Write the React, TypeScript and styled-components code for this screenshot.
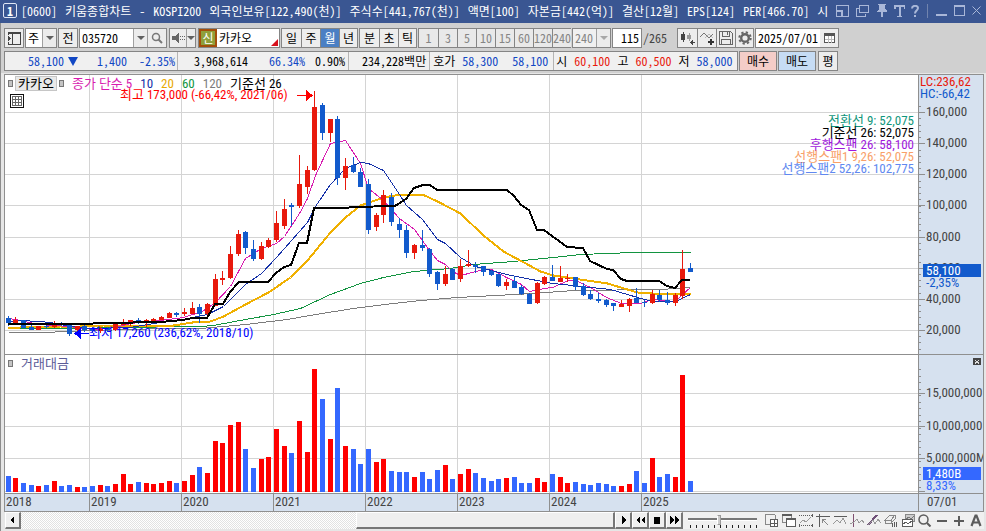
import React from 'react';
import styled, { createGlobalStyle, css } from 'styled-components';

const MONO = '"Noto Sans Mono CJK KR", "Noto Sans CJK KR", monospace';
const NARROW = '"Roboto Condensed", Roboto, "Noto Sans CJK KR", sans-serif';

const GlobalStyle = createGlobalStyle`
  * { box-sizing: border-box; }
  body { margin: 0; background: #e6e6e6; font: 12px/16px ${MONO}; color: #000; }
  button, input, select { font: inherit; color: inherit; border-radius: 0; }
`;

const RED = '#e8190c';
const BLUE = '#1147c4';

const Page = styled.div`
  min-height: 100vh;
  display: flex;
  flex-direction: column;
  border-left: 1px solid #8c8c8c;
`;

/* ---------- title bar ---------- */

const TitleBar = styled.header`
  height: 23px;
  margin-left: -1px;
  padding: 0 1px 2px 3px;
  display: flex;
  align-items: center;
  background: #3a5692;
  color: #fff;
`;
const WindowNumber = styled.span`
  width: 14px;
  height: 15px;
  border: 1px solid #dfe6f5;
  border-radius: 2px;
  font-weight: 700;
  line-height: 13px;
  text-align: center;
`;
const Title = styled.h1`
  flex: 1;
  min-width: 0;
  display: flex;
  gap: 8px;
  margin: 0 0 0 4px;
  overflow: hidden;
  white-space: pre;
  font-size: 12px;
  font-weight: 400;
  line-height: 20px;
`;
const WindowButtons = styled.div`
  display: flex;
  align-items: center;
`;
const WindowButton = styled.button<{ $w?: number }>`
  width: ${p => p.$w ?? 18}px;
  height: 20px;
  padding: 0;
  border: 0;
  background: none;
  color: #a9b7d8;
  display: flex;
  align-items: center;
  justify-content: center;
`;
const TitleDivider = styled.span`
  width: 1px;
  height: 14px;
  margin: 0 4px;
  background: #7184ae;
`;

/* ---------- toolbars ---------- */

const Toolbars = styled.div`
  padding: 5px 0 2px 3px;
  display: flex;
  flex-direction: column;
  gap: 3px;
  background: #d0d0d0;
`;
const Bar = styled.div`
  height: 20px;
  display: flex;
  gap: 1px;
  white-space: pre;
`;
const Group = styled.div<{ $w?: number; $ml?: number; $white?: boolean }>`
  position: relative;
  display: flex;
  flex: none;
  width: ${p => (p.$w ? `${p.$w}px` : 'auto')};
  margin-left: ${p => p.$ml ?? 0}px;
  border: 1px solid #858585;
  background: ${p => (p.$white ? '#fff' : '#f0f0f0')};
`;
const ToolButton = styled.button<{ $w?: number; $on?: boolean; $dim?: boolean; $bg?: string }>`
  width: ${p => p.$w ?? 19}px;
  height: 18px;
  flex: none;
  padding: 0;
  border: 0;
  background: ${p => (p.$on ? '#4a7fc4' : p.$bg ?? '#ededed')};
  color: ${p => (p.$on ? '#fff' : p.$dim ? '#858585' : '#000')};
  display: flex;
  align-items: center;
  justify-content: center;
  line-height: 18px;
  & + & { border-left: 1px solid #858585; }
`;
const DropArrow = styled.button<{ $w: number; $dim?: boolean }>`
  width: ${p => p.$w}px;
  flex: none;
  padding: 0;
  border: 0;
  border-left: 1px solid #a0a0a0;
  background: #ececec;
  display: flex;
  align-items: center;
  justify-content: center;
  &::after {
    content: '';
    border: 4px solid transparent;
    border-top-color: ${p => (p.$dim ? '#a8a8a8' : '#606060')};
    border-bottom: 0;
  }
  & + ${ToolButton} { border-left: 1px solid #a0a0a0; }
`;
const Field = styled.input<{ $right?: boolean }>`
  flex: 1;
  min-width: 0;
  width: 0;
  padding: 0 2px;
  border: 0;
  background: none;
  outline: 0;
  line-height: 18px;
  text-align: ${p => (p.$right ? 'right' : 'left')};
`;
const Select = styled.select<{ $dim?: boolean }>`
  flex: 1;
  min-width: 0;
  padding: 0 0 0 2px;
  border: 0;
  outline: 0;
  appearance: none;
  background: none;
  color: ${p => (p.$dim ? '#858585' : '#000')};
`;
const CreditBadge = styled.button`
  width: 18px;
  height: 18px;
  padding: 0;
  border: 2px solid #a34e0a;
  background: #8f9f3a;
  color: #fff;
  line-height: 14px;
`;
const RedCorner = styled.span`
  position: absolute;
  right: 1px;
  bottom: 1px;
  border-left: 7px solid transparent;
  border-bottom: 7px solid #d8101c;
`;
const Total = styled.span`
  width: 33px;
  line-height: 20px;
  color: #444;
`;

const QuoteCell = styled.div<{ $pl: number; $pr: number }>`
  display: flex;
  align-items: center;
  line-height: 18px;
  padding: 0 ${p => p.$pr}px 0 ${p => p.$pl}px;
  & + & { border-left: 1px solid #b4b4b4; }
`;
const Num = styled.span<{ $tone?: 'up' | 'down'; $gap?: number }>`
  margin-left: ${p => p.$gap ?? 0}px;
  color: ${p => (p.$tone === 'up' ? RED : p.$tone === 'down' ? BLUE : '#000')};
`;
const DownMark = styled.i`
  margin-left: 4px;
  border: 5px solid transparent;
  border-top: 9px solid ${BLUE};
  border-bottom: 0;
`;

/* ---------- chart ---------- */

const ChartFrame = styled.main`
  margin: 1px 2px 0 3px;
  border: 1px solid #8f8f8f;
  font-family: ${NARROW};
`;
const ChartGrid = styled.div`
  display: grid;
  grid-template-columns: minmax(0, 1fr) 65px;
`;
const Pane = styled.section<{ $h: number }>`
  position: relative;
  height: ${p => p.$h}px;
  border-bottom: 1px solid #8f8f8f;
  background: #fff;
  overflow: hidden;
`;
const Axis = styled.aside<{ $h: number }>`
  position: relative;
  height: ${p => p.$h}px;
  border-left: 1px solid #8f8f8f;
  border-bottom: 1px solid #8f8f8f;
  background: #d6e1ef;
  overflow: hidden;
`;
const Plot = styled.svg`
  display: block;
  width: 100%;
  height: 100%;
  font: 13px ${NARROW};
`;
const Legend = styled.div`
  position: absolute;
  top: 1px;
  left: 3px;
  display: flex;
  align-items: center;
  gap: 8px;
  height: 15px;
  white-space: pre;
  font-size: 13px;
`;
const Dot = styled.span`
  width: 5px;
  height: 7px;
  border: 1px solid #777;
  background: #c4c4c4;
`;
const NameTag = styled.button`
  height: 15px;
  width: 42px;
  margin: 0 -6px;
  padding: 0;
  border: 1px solid #c6c6c6;
  background: #e9e9e9;
  line-height: 13px;
`;
const LegendItem = styled.span<{ $c: string }>`
  color: ${p => p.$c};
  line-height: 15px;
`;
const GridToggle = styled.button`
  position: absolute;
  left: 5px;
  top: 19px;
  width: 14px;
  height: 14px;
  padding: 0;
  border: 1px solid #111;
  background: #fff;
  display: flex;
  align-items: center;
  justify-content: center;
`;
const SpanList = styled.ul`
  position: absolute;
  right: 4px;
  top: 40px;
  margin: 0;
  padding: 0;
  list-style: none;
  text-align: right;
  font-size: 13px;
  line-height: 12px;
`;
const SpanItem = styled.li<{ $c: string }>`
  color: ${p => p.$c};
`;
const Extremes = styled.div`
  position: absolute;
  left: 1px;
  top: 1px;
  font-size: 13px;
  line-height: 12px;
`;
const Extreme = styled.div<{ $c: string }>`
  color: ${p => p.$c};
`;
const CloseMark = styled.button`
  position: absolute;
  right: 2px;
  top: 3px;
  width: 8px;
  height: 7px;
  padding: 0;
  border: 0;
  background: #444;
  display: flex;
`;
const DateBar = styled.div`
  display: flex;
  height: 17px;
  background: #d6e1ef;
  color: #444;
  font-size: 13px;
  line-height: 16px;
`;
const Year = styled.span<{ $w?: number }>`
  flex: ${p => (p.$w ? 'none' : '1')};
  width: ${p => (p.$w ? `${p.$w}px` : 'auto')};
  padding-left: 1px;
  & + & { border-left: 1px solid #8f8f8f; }
`;
const LastDate = styled.span`
  padding-left: 8px;
  border-left: 1px solid #8f8f8f;
  background: #d6e1ef;
  color: #444;
  font-size: 13px;
  line-height: 16px;
`;

/* ---------- bottom bar ---------- */

const BottomBar = styled.footer`
  display: flex;
  height: 17px;
  margin: 0 2px 0 4px;
  background: #f0f0f0;
`;
const raised = css`
  border: 1px solid #fff;
  border-right: 2px solid #777;
  border-bottom: 2px solid #777;
  background: #efefef;
`;
const ScrollButton = styled.button<{ $w: number }>`
  ${raised}
  width: ${p => p.$w}px;
  flex: none;
  padding: 0;
  display: flex;
  align-items: center;
  justify-content: center;
`;
const Track = styled.div`
  flex: 337;
  background: repeating-conic-gradient(#e2e2e2 0 25%, #fff 0 50%) 0 0 / 2px 2px;
`;
const Thumb = styled.div`
  ${raised}
  flex: 258;
`;
const ZoomBox = styled.div`
  width: 80px;
  flex: none;
  padding: 2px 4px 0 5px;
`;
const ZoomRange = styled.input`
  display: block;
  width: 69px;
  height: 10px;
  margin: 0;
  appearance: none;
  background: none;
  &::-webkit-slider-runnable-track {
    height: 3px;
    border-top: 2px solid #777;
    border-bottom: 1px solid #fff;
    background: #ddd;
  }
  &::-webkit-slider-thumb {
    appearance: none;
    width: 4px;
    height: 10px;
    margin-top: -5px;
    border: 1px solid #999;
    border-left-color: #fff;
    background: #ccc;
  }
`;
const ZoomTicks = styled.div`
  height: 3px;
  margin: 1px 2px 0 2px;
  background: repeating-linear-gradient(90deg, #222 0 1px, transparent 1px 6px);
`;
const IconRow = styled.div`
  display: flex;
  align-items: center;
`;
const IconButton = styled.button`
  width: 17px;
  height: 17px;
  padding: 0;
  border: 0;
  background: none;
  display: flex;
  align-items: center;
  justify-content: center;
`;

/* ---------- icons ---------- */

type IconProps = { w?: number; h?: number; c?: string; crisp?: boolean; children: React.ReactNode };
const Icon = ({ w = 14, h = 13, c = '#5c5c5c', crisp = true, children }: IconProps) => (
  <svg width={w} height={h} viewBox={`0 0 ${w} ${h}`} fill="none" stroke={c} shapeRendering={crisp ? 'crispEdges' : 'auto'} aria-hidden="true">
    {children}
  </svg>
);
const TC = '#a9b7d8';

/* ---------- data ---------- */

/* rising flag, body top, body bottom, high, low, volume top */
type Candle = [0 | 1, number, number, number, number, number];
const CANDLES: Candle[] = [
  [0, 318, 323, 316, 326, 476], [1, 320, 323, 317, 324, 478], [0, 320, 328, 320, 328, 483], [0, 327, 330, 325, 330, 485],
  [1, 326, 330, 326, 330, 486], [0, 326, 327, 325, 328, 485], [1, 323, 327, 321, 328, 481], [0, 323, 325, 322, 326, 486],
  [0, 324, 334, 323, 336, 485], [1, 326, 330, 326, 331, 487], [0, 326, 330, 325, 332, 487], [0, 329, 331, 327, 333, 486],
  [1, 328, 331, 327, 333, 485], [0, 328, 330, 327, 332, 486], [1, 323, 330, 323, 331, 484], [1, 323, 325, 319, 325, 474],
  [1, 320, 324, 320, 326, 484], [0, 320, 323, 318, 324, 482], [1, 320, 323, 319, 327, 483], [1, 319, 321, 318, 322, 484],
  [1, 317, 320, 316, 320, 483], [1, 313, 318, 312, 318, 481], [0, 313, 315, 312, 317, 483], [1, 312, 314, 308, 316, 481],
  [1, 308, 314, 302, 314, 475], [0, 307, 314, 304, 323, 467], [1, 304, 314, 303, 315, 473], [1, 279, 306, 274, 306, 441],
  [1, 278, 280, 271, 285, 443], [1, 254, 278, 246, 279, 425], [1, 234, 254, 230, 256, 422], [0, 232, 248, 231, 254, 449],
  [0, 249, 259, 240, 261, 468], [1, 246, 259, 242, 260, 459], [1, 240, 247, 238, 248, 457], [1, 223, 240, 211, 242, 429],
  [1, 209, 226, 199, 229, 446], [0, 205, 207, 203, 226, 453], [1, 184, 206, 155, 208, 421], [1, 170, 187, 166, 194, 452],
  [1, 107, 170, 91, 171, 369], [0, 105, 133, 103, 140, 399], [1, 119, 133, 119, 142, 439], [0, 119, 178, 116, 185, 388],
  [1, 166, 178, 158, 190, 446], [0, 165, 172, 157, 173, 449], [0, 172, 187, 168, 187, 464], [0, 184, 230, 179, 234, 449],
  [1, 215, 227, 213, 231, 462], [1, 195, 215, 190, 223, 459], [0, 197, 222, 193, 226, 471], [0, 224, 230, 218, 238, 472],
  [0, 230, 253, 225, 258, 472], [1, 245, 253, 244, 259, 477], [0, 245, 248, 230, 251, 472], [0, 249, 274, 248, 277, 479],
  [0, 272, 284, 271, 290, 470], [1, 274, 284, 266, 286, 465], [0, 269, 280, 268, 280, 479], [1, 266, 279, 259, 282, 474],
  [1, 264, 266, 250, 267, 469], [0, 265, 267, 262, 273, 473], [0, 266, 272, 266, 276, 478], [0, 271, 275, 270, 276, 481],
  [0, 274, 286, 274, 287, 479], [1, 282, 286, 279, 290, 478], [0, 281, 288, 276, 288, 477], [0, 287, 294, 285, 295, 483],
  [0, 294, 304, 293, 304, 483], [1, 283, 303, 282, 304, 478], [1, 277, 284, 276, 285, 482], [0, 277, 281, 265, 281, 474],
  [1, 278, 282, 266, 282, 477], [1, 278, 279, 274, 282, 483], [0, 277, 287, 277, 290, 482], [0, 286, 295, 283, 296, 484],
  [0, 294, 299, 290, 300, 485], [0, 299, 301, 293, 303, 483], [0, 300, 305, 299, 307, 484], [0, 303, 306, 303, 311, 486],
  [1, 304, 307, 300, 307, 486], [1, 299, 306, 298, 312, 484], [0, 298, 303, 288, 303, 471], [0, 302, 303, 300, 307, 483],
  [1, 294, 303, 290, 304, 458], [0, 295, 300, 290, 302, 477], [0, 300, 303, 292, 305, 474], [1, 295, 303, 293, 306, 477],
  [1, 269, 296, 250, 299, 375], [0, 268, 272, 263, 272, 481],
];
const candleX = (i: number) => 8 + Math.floor((i * 92) / 12);

const LINES: { color: string; width: number; points: string }[] = [
  { color: '#7c7c7c', width: 1, points: '8,332 50,332 60,331 130,329 163,328 200,328 245,324 287,319 315,314 353,308 393,303 420,300 457,297 533,293 573,290 660,289 690,287' },
  { color: '#129440', width: 1, points: '8,328 80,328 113,327 200,326 213,325 245,319 273,314 300,308 330,294 360,283 383,277 413,271 450,268 473,264 513,261 553,257 580,254 633,252 690,252' },
  { color: '#f0b000', width: 2, points: '8,328 20,327 60,326 80,326 103,325 173,325 192,322 210,321 223,316 245,304 268,292 290,277 307,260 330,232 345,217 360,205 383,197 400,194 422,194 437,201 460,213 483,235 503,251 514,257 529,265 540,271 553,275 573,278 607,283 637,292 667,294 683,293 690,293' },
  { color: '#d81cb0', width: 1, points: '8,318 20,320 38,324 69,326 92,329 115,327 130,323 160,320 183,317 202,311 215,302 230,286 245,258 261,248 276,243 284,236 299,213 307,198 315,175 330,143 345,140 360,163 368,188 383,200 399,218 414,229 429,250 437,260 445,264 452,271 460,275 468,273 483,269 491,269 506,277 521,284 529,291 544,288 552,287 568,280 575,280 590,287 606,297 621,303 640,303 652,299 675,301 682,294 690,287' },
  { color: '#1430a8', width: 1, points: '8,321 20,320 38,321 50,322 70,326 92,328 130,327 160,322 183,319 207,314 223,306 245,284 261,273 276,257 291,240 307,222 315,206 330,184 345,168 360,162 368,163 383,170 399,194 406,205 422,219 437,239 445,243 460,257 475,266 491,270 506,274 521,277 552,283 573,285 590,287 610,289 637,297 652,301 675,301 690,294' },
  { color: '#000', width: 2, points: '8,324 80,324 107,323 160,322 183,320 192,318 207,318 215,304 223,304 230,292 239,282 268,282 276,273 284,267 291,265 299,243 307,243 314,208 345,208 353,207 395,206 406,199 414,188 423,185 430,185 437,190 507,190 514,196 521,205 529,210 537,230 544,230 567,247 583,248 590,261 607,269 613,270 621,279 627,281 659,281 667,286 675,288 682,280 690,280' },
];

const YEARS = [89, 181, 273, 365, 457, 549, 641];
const PRICE_LEVELS: [number, string][] = [
  [112, '160,000'], [143, '140,000'], [174, '120,000'], [205, '100,000'], [237, '80,000'], [268, '60,000'], [299, '40,000'], [330, '20,000'],
];
const VOLUME_LEVELS: [number, string][] = [[393, '15,000,000'], [426, '10,000,000'], [458, '5,000,000M'], [491, '']];
const PRICE_TICKS = Array.from({ length: 40 }, (_, i) => Math.round(106 + i * 6.22));
const VOLUME_TICKS = Array.from({ length: 19 }, (_, i) => Math.round(369 + i * 6.54));

const GridLines = ({ levels }: { levels: [number, string][] }) => (
  <g stroke="#d4d4d4">
    {levels.map(([y]) => <line key={y} x1="0" x2="101%" y1={y + 0.5} y2={y + 0.5} />)}
    {YEARS.map(x => <line key={x} x1={x + 0.5} x2={x + 0.5} y1="75" y2="493" />)}
  </g>
);

const AxisMarks = ({ levels, ticks }: { levels: [number, string][]; ticks: number[] }) => (
  <>
    <g stroke="#8f8f8f">
      {ticks.map(y => <line key={y} x1="0" x2="2" y1={y + 0.5} y2={y + 0.5} />)}
      {levels.map(([y]) => <line key={y} x1="0" x2="6" y1={y + 0.5} y2={y + 0.5} />)}
    </g>
    <g fill="#444">
      {levels.map(([y, label]) => label && <text key={y} x="7" y={y + 4}>{label}</text>)}
    </g>
  </>
);

const TITLE = ['[0600]', '키움종합차트', '-', 'KOSPI200', '외국인보유[122,490(천)]', '주식수[441,767(천)]', '액면[100]', '자본금[442(억)]', '결산[12월]', 'EPS[124]', 'PER[466.70]', '시'];
const LEGEND: [string, string][] = [
  ['종가 단순 5', '#d81cb0'], ['10', '#1430a8'], ['20', '#e8a800'], ['60', '#129440'], ['120', '#7c7c7c'], ['기준선 26', '#000'],
];
const SPANS: [string, string][] = [
  ['전환선 9: 52,075', '#10967c'], ['기준선 26: 52,075', '#000'], ['후행스팬 26: 58,100', '#a018dc'],
  ['선행스팬1 9,26: 52,075', '#f8a068'], ['선행스팬2 52,26: 102,775', '#6088f0'],
];

const CHART_TOOLS: [string, React.ReactNode][] = [
  ['새 창 추가', <><path d="M10.5 5V1.5L9.5 .5H.5V10.5H5" stroke="#888" /><rect x="5.5" y="5.5" width="7" height="7" fill="#fff" /><path d="M9.5 6V12M6 9.5H12" /></>],
  ['창 겹치기', <><rect x="0.5" y="0.5" width="9" height="8" stroke="#888" /><path d="M0 1H10" strokeWidth="2" /><rect x="4.5" y="4.500" width="9" height="8" fill="#fff" /><path d="M4 5H14" strokeWidth="2" /></>],
  ['영역 선택', <><path d="M0 1.5H14M0 11.5H14" strokeDasharray="1 1" /><path d="M1 9L4 6L7 8L12 3" stroke="#999" /><path d="M13.5 0V3M13.5 10V13M.5 10V13" /></>],
  ['십자선', <><path d="M0 2.5H14M3.5 0V13" /><path d="M6 5.5H10M6.5 5V9M7 6L12 11" stroke="#888" /></>],
  ['가로선', <><path d="M1 2.5H14" /><path d="M0 10L4 6L7 9L10 4L13 10" stroke="#999" /></>],
  ['세로선', <><path d="M3.5 0V13" stroke="#805070" /><path d="M0 10L4 8L7 5L9 9L12 6L14 9" stroke="#999" /></>],
  ['추세선', <><path d="M1 11L10 1" stroke="#705078" strokeWidth="2" /><path d="M1 11L6 6L8 10L11 5L14 9" stroke="#999" /></>],
  ['모두 지우기', <><path d="M1 6L6 1H11L7 6ZM1 6V9H7V6M7 9L11 5V1" stroke="#888" /><path d="M8.5 9V13M10.5 8V13M12.5 8V13" /></>],
  ['차트 비교', <><rect x="4.500" y="0.500" width="9" height="7" fill="#ccc" stroke="#888" /><path d="M5 5L8 3L10 5L13 2" stroke="#777" /><rect x="1.500" y="5.500" width="10" height="7" fill="#fff" /><path d="M2 10L5 8L7 10L11 7" /></>],
];

export default function App() {
  return (
    <Page>
      <GlobalStyle />
      <TitleBar>
        <WindowNumber>1</WindowNumber>
        <Title>{TITLE.map(part => <span key={part}>{part}</span>)}</Title>
        <WindowButtons>
          <WindowButton $w={20} aria-label="창 크기"><Icon w={13} h={12} c={TC}><rect x="0.500" y="0.500" width="12" height="11" /><path d="M1 6H6V11" strokeWidth="2" /></Icon></WindowButton>
          <WindowButton $w={21} aria-label="창 복제"><Icon w={13} h={12} c={TC}><rect x="3.5" y="0.5" width="9" height="7" /><path d="M2.5 3.5H.5V11.5H9.5V9" /></Icon></WindowButton>
          <WindowButton aria-label="고정"><Icon w={12} h={13} c="none"><path d="M2 0H10V1H9V5L11 7V8H1V7L3 5V1H2Z M5 8H7V13H5Z" fill={TC} /></Icon></WindowButton>
          <WindowButton $w={16} aria-label="글꼴"><Icon w={11} h={12} c={TC}><path d="M0 1H11M5.500 1V11M3 11.500H8M.5 1V4M10.500 1V4" strokeWidth="2" /></Icon></WindowButton>
          <WindowButton $w={16} aria-label="도움말"><Icon w={8} h={12} c={TC} crisp={false}><path d="M1 3.500C1 0 7 0 7 3C7 5.500 4 5.500 4 8.500M4 10V12" strokeWidth="2" /></Icon></WindowButton>
          <TitleDivider />
          <WindowButton aria-label="최소화"><Icon w={11} h={12} c={TC}><path d="M0 10H11" strokeWidth="2" /></Icon></WindowButton>
          <WindowButton aria-label="최대화"><Icon w={11} h={11} c={TC}><rect x="0.5" y="1.500" width="10" height="9" /><path d="M0 1H11" strokeWidth="2" /></Icon></WindowButton>
          <WindowButton $w={17} aria-label="닫기"><Icon w={9} h={9} c={TC} crisp={false}><path d="M.5 .5L8.5 8.5M8.500 .5L.5 8.500" /></Icon></WindowButton>
        </WindowButtons>
      </TitleBar>

      <Toolbars>
        <Bar>
          <Group $w={20}>
            <ToolButton $w={18} aria-label="메뉴 열기"><Icon w={13} h={13} c="#444"><path d="M.5 3V.5H12.500V12.500H.5V10M4.500 1V12M1 1.500H12" /><path d="M0 4L3 6.500L0 9Z" fill="#444" stroke="none" /></Icon></ToolButton>
          </Group>
          <Group $w={32} $white>
            <Select aria-label="시장 구분" defaultValue="주"><option>주</option></Select>
            <DropArrow $w={14} aria-label="시장 목록" />
          </Group>
          <Group $w={20}><ToolButton $w={18}>전</ToolButton></Group>
          <Group $w={88} $white>
            <Field aria-label="종목코드" defaultValue="035720" />
            <DropArrow $w={14} aria-label="종목 목록" />
            <ToolButton $w={19} aria-label="종목 검색"><Icon w={12} h={12} c="#777" crisp={false}><circle cx="5" cy="5" r="3.500" strokeWidth="1.500" /><path d="M7.500 7.500L11 11" strokeWidth="2" /></Icon></ToolButton>
          </Group>
          <Group $w={27} $ml={1}>
            <ToolButton $w={16} aria-label="음성"><Icon w={13} h={12} c="none"><path d="M0 4H3L7 0V12L3 8H0Z" fill="#666" /><path d="M8 4h1v1h-1zM10 4h1v1h-1zM12 4h1v1h-1zM8 7h1v1h-1zM10 7h1v1h-1zM12 7h1v1h-1z" fill="#666" /></Icon></ToolButton>
            <DropArrow $w={9} aria-label="음성 설정" />
          </Group>
          <Group $w={82} $ml={1} $white>
            <CreditBadge>신</CreditBadge>
            <Field aria-label="종목명" defaultValue="카카오" />
            <RedCorner />
          </Group>
          <Group>
            <ToolButton>일</ToolButton><ToolButton>주</ToolButton><ToolButton $on>월</ToolButton><ToolButton $w={18}>년</ToolButton>
          </Group>
          <Group>
            <ToolButton>분</ToolButton><ToolButton>초</ToolButton><ToolButton $w={18}>틱</ToolButton>
          </Group>
          <Group $w={153}>
            {['1', '3', '5', '10', '15', '60', '120', '240'].map(n => <ToolButton key={n} $dim $bg="#e9e9e9">{n}</ToolButton>)}
          </Group>
          <Group $w={39}>
            <Select $dim aria-label="분 단위" defaultValue="240"><option>240</option></Select>
            <DropArrow $w={14} $dim aria-label="분 단위 목록" />
          </Group>
          <Group $w={30} $white><Field $right aria-label="표시 개수" defaultValue="115" /></Group>
          <Total>/265</Total>
          <Group>
            <ToolButton aria-label="차트 유형"><Icon w={14} h={13} c="none"><path d="M0 2H4V8H0ZM2 0h1v10H2Z" fill="#444" /><path d="M6 3H10V7H6ZM8 1h1v8H8Z" fill="#999" /><path d="M9 10h5v1H9zM9 10l3-3v7z" fill="#444" /></Icon></ToolButton>
            <ToolButton aria-label="지표 추가"><Icon w={14} h={13} c="#777"><path d="M0 5L4 1L9 6L13 2" /><path d="M5 6L9 2L13 6" stroke="#bbb" /><path d="M11 7V13M8 10H14" stroke="#333" strokeWidth="2" /></Icon></ToolButton>
            <ToolButton aria-label="저장"><Icon w={14} h={14} c="#666"><path d="M.5 .5H11.500L13.500 2.500V13.500H.5ZM3.500 1V5.500H10.500V1M2.500 13V8.500H11.500V13M8.500 1V4" /></Icon></ToolButton>
            <ToolButton $w={18} aria-label="설정"><Icon w={14} h={14} c="#666" crisp={false}><circle cx="7" cy="7" r="3.800" strokeWidth="2.400" /><circle cx="7" cy="7" r="5.700" strokeWidth="2" strokeDasharray="2.240 2.240" /></Icon></ToolButton>
          </Group>
          <Group $w={84} $white>
            <Field aria-label="기준일" defaultValue="2025/07/01" />
            <ToolButton $w={18} aria-label="달력"><Icon w={11} h={10} c="#555"><rect x="0.500" y="0.500" width="10" height="9" fill="#fff" /><path d="M0 1.500H11" strokeWidth="3" /><path d="M1 6.500H10M4.500 3V10M7.500 3V10" stroke="#bbb" /></Icon></ToolButton>
          </Group>
        </Bar>

        <Bar>
          <Group $w={734}>
            <QuoteCell $pl={23} $pr={2}>
              <Num $tone="down">58,100</Num><DownMark /><Num $tone="down" $gap={19}>1,400</Num><Num $tone="down" $gap={12}>-2.35%</Num>
            </QuoteCell>
            <QuoteCell $pl={16} $pr={3}>
              <Num>3,968,614</Num><Num $tone="down" $gap={21}>66.34%</Num><Num $gap={10}>0.90%</Num>
            </QuoteCell>
            <QuoteCell $pl={13} $pr={3}><Num>234,228백만</Num></QuoteCell>
            <QuoteCell $pl={3} $pr={5}>
              <Num>호가</Num><Num $tone="down" $gap={7}>58,300</Num><Num $tone="down" $gap={14}>58,100</Num>
            </QuoteCell>
            <QuoteCell $pl={2} $pr={5}>
              <Num>시</Num><Num $tone="up" $gap={7}>60,100</Num>
              <Num $gap={7}>고</Num><Num $tone="up" $gap={7}>60,500</Num>
              <Num $gap={7}>저</Num><Num $tone="down" $gap={7}>58,000</Num>
            </QuoteCell>
          </Group>
          <Group $w={38}><ToolButton $w={36} $bg="#f4cdc8">매수</ToolButton></Group>
          <Group $w={38}><ToolButton $w={36} $bg="#c6dcf4">매도</ToolButton></Group>
          <Group $w={20} $ml={1}><ToolButton $w={18}>평</ToolButton></Group>
        </Bar>
      </Toolbars>

      <ChartFrame>
        <ChartGrid>
          <Pane $h={280} aria-label="가격 차트">
            <Plot>
              <g transform="translate(-5 -75)" shapeRendering="crispEdges">
                <GridLines levels={PRICE_LEVELS} />
                {LINES.slice(0, 5).map(l => <polyline key={l.color} points={l.points} transform="translate(.5 .5)" fill="none" stroke={l.color} strokeWidth={l.width} />)}
                {CANDLES.map(([up, top, bottom, high, low], i) => (
                  <g key={i} fill={up ? RED : '#125acc'}>
                    <rect x={candleX(i)} y={high} width="1" height={low - high} />
                    <rect x={candleX(i) - 2} y={top} width="5" height={bottom - top} />
                  </g>
                ))}
                <polyline points={LINES[5].points} fill="none" stroke="#000" strokeWidth="2" />
                <path d="M297 95.500H307" stroke="#f00" />
                <path d="M306 90L313 95.500L306 101Z" fill="#f00" />
                <path d="M80 333.500H89" stroke="#00f" />
                <path d="M81 328L74 333.500L81 339Z" fill="#00f" />
                <text x="120" y="99" fill="#f00">최고 173,000 (-66,42%, 2021/06)</text>
                <text x="89" y="337" fill="#00f">최저 17,260 (236,62%, 2018/10)</text>
              </g>
            </Plot>
            <Legend>
              <Dot /><NameTag>카카오</NameTag><Dot />
              {LEGEND.map(([t, c]) => <LegendItem key={t} $c={c}>{t}</LegendItem>)}
            </Legend>
            <GridToggle aria-label="데이터 표"><Icon w={10} h={10} c="#666"><path d="M.5 .5H9.500V9.500H.5ZM0 3.500H10M0 6.500H10M3.500 0V10M6.500 0V10" /></Icon></GridToggle>
            <SpanList>{SPANS.map(([t, c]) => <SpanItem key={t} $c={c}>{t}</SpanItem>)}</SpanList>
          </Pane>
          <Axis $h={280}>
            <Plot>
              <g transform="translate(0 -75)" shapeRendering="crispEdges">
                <AxisMarks levels={PRICE_LEVELS} ticks={PRICE_TICKS} />
                <rect x="4" y="264" width="58" height="13" fill="#125acc" />
                <text x="7" y="275" fill="#fff">58,100</text>
                <text x="7" y="287" fill="#125acc">-2,35%</text>
              </g>
            </Plot>
            <Extremes><Extreme $c={RED}>LC:236,62</Extreme><Extreme $c="#125acc">HC:-66,42</Extreme></Extremes>
          </Axis>

          <Pane $h={139} aria-label="거래대금 차트">
            <Plot>
              <g transform="translate(-5 -355)" shapeRendering="crispEdges">
                <GridLines levels={VOLUME_LEVELS} />
                {CANDLES.map(([up, , , , , top], i) => (
                  <rect key={i} x={candleX(i) - 2} y={top} width="5" height={492 - top} fill={up ? '#f00' : '#3468ff'} />
                ))}
              </g>
            </Plot>
            <Legend><Dot /><LegendItem $c="#5c5c98">거래대금</LegendItem></Legend>
          </Pane>
          <Axis $h={139}>
            <Plot>
              <g transform="translate(0 -355)" shapeRendering="crispEdges">
                <AxisMarks levels={VOLUME_LEVELS} ticks={VOLUME_TICKS} />
                <rect x="4" y="467" width="58" height="13" fill="#3468ff" />
                <text x="7" y="478" fill="#fff">1,480B</text>
                <text x="7" y="490" fill="#3468ff">8,33%</text>
              </g>
            </Plot>
            <CloseMark aria-label="거래대금 닫기"><Icon w={8} h={7} c="#ddd"><path d="M2 2L6 5.500M6 2L2 5.500" /></Icon></CloseMark>
          </Axis>

          <DateBar>
            <Year $w={84}>2018</Year>
            {[2019, 2020, 2021, 2022, 2023, 2024].map(y => <Year key={y} $w={92}>{y}</Year>)}
            <Year>2025</Year>
          </DateBar>
          <LastDate>07/01</LastDate>
        </ChartGrid>
      </ChartFrame>

      <BottomBar>
        <ScrollButton $w={16} aria-label="왼쪽으로"><Icon w={5} h={8} c="none"><path d="M4 0V8L0 4Z" fill="#000" /></Icon></ScrollButton>
        <Track /><Thumb />
        <ScrollButton $w={17} aria-label="오른쪽으로"><Icon w={5} h={8} c="none"><path d="M1 0V8L5 4Z" fill="#000" /></Icon></ScrollButton>
        <ScrollButton $w={17} aria-label="뒤로"><Icon w={9} h={8} c="none"><path d="M4 0V8L0 4ZM9 0V8L5 4Z" fill="#000" /></Icon></ScrollButton>
        <ScrollButton $w={17} aria-label="정지"><Icon w={6} h={7} c="none"><path d="M0 0H6V7H0Z" fill="#000" /></Icon></ScrollButton>
        <ScrollButton $w={17} aria-label="앞으로"><Icon w={9} h={8} c="none"><path d="M0 0V8L4 4ZM5 0V8L9 4Z" fill="#000" /></Icon></ScrollButton>
        <ZoomBox>
          <ZoomRange type="range" aria-label="확대 비율" min={0} max={100} defaultValue={45} />
          <ZoomTicks />
        </ZoomBox>
        <IconRow>
          {CHART_TOOLS.map(([label, art]) => <IconButton key={label} aria-label={label}><Icon>{art}</Icon></IconButton>)}
          <IconButton aria-label="돋보기"><Icon crisp={false}><circle cx="5.500" cy="5.500" r="4.500" strokeWidth="1.500" /><path d="M9 9L12.500 12.500" strokeWidth="2" /></Icon></IconButton>
          <IconButton aria-label="축소"><Icon><path d="M2 7H12" strokeWidth="2" /></Icon></IconButton>
          <IconButton aria-label="확대"><Icon><path d="M2 7H12M7 2V12" strokeWidth="2" /></Icon></IconButton>
          <IconButton aria-label="자동"><Icon crisp={false}><path d="M2.500 12L6.500 1.500H7.500L11.500 12M4 8.500H10" strokeWidth="2.200" /></Icon></IconButton>
        </IconRow>
      </BottomBar>
    </Page>
  );
}
